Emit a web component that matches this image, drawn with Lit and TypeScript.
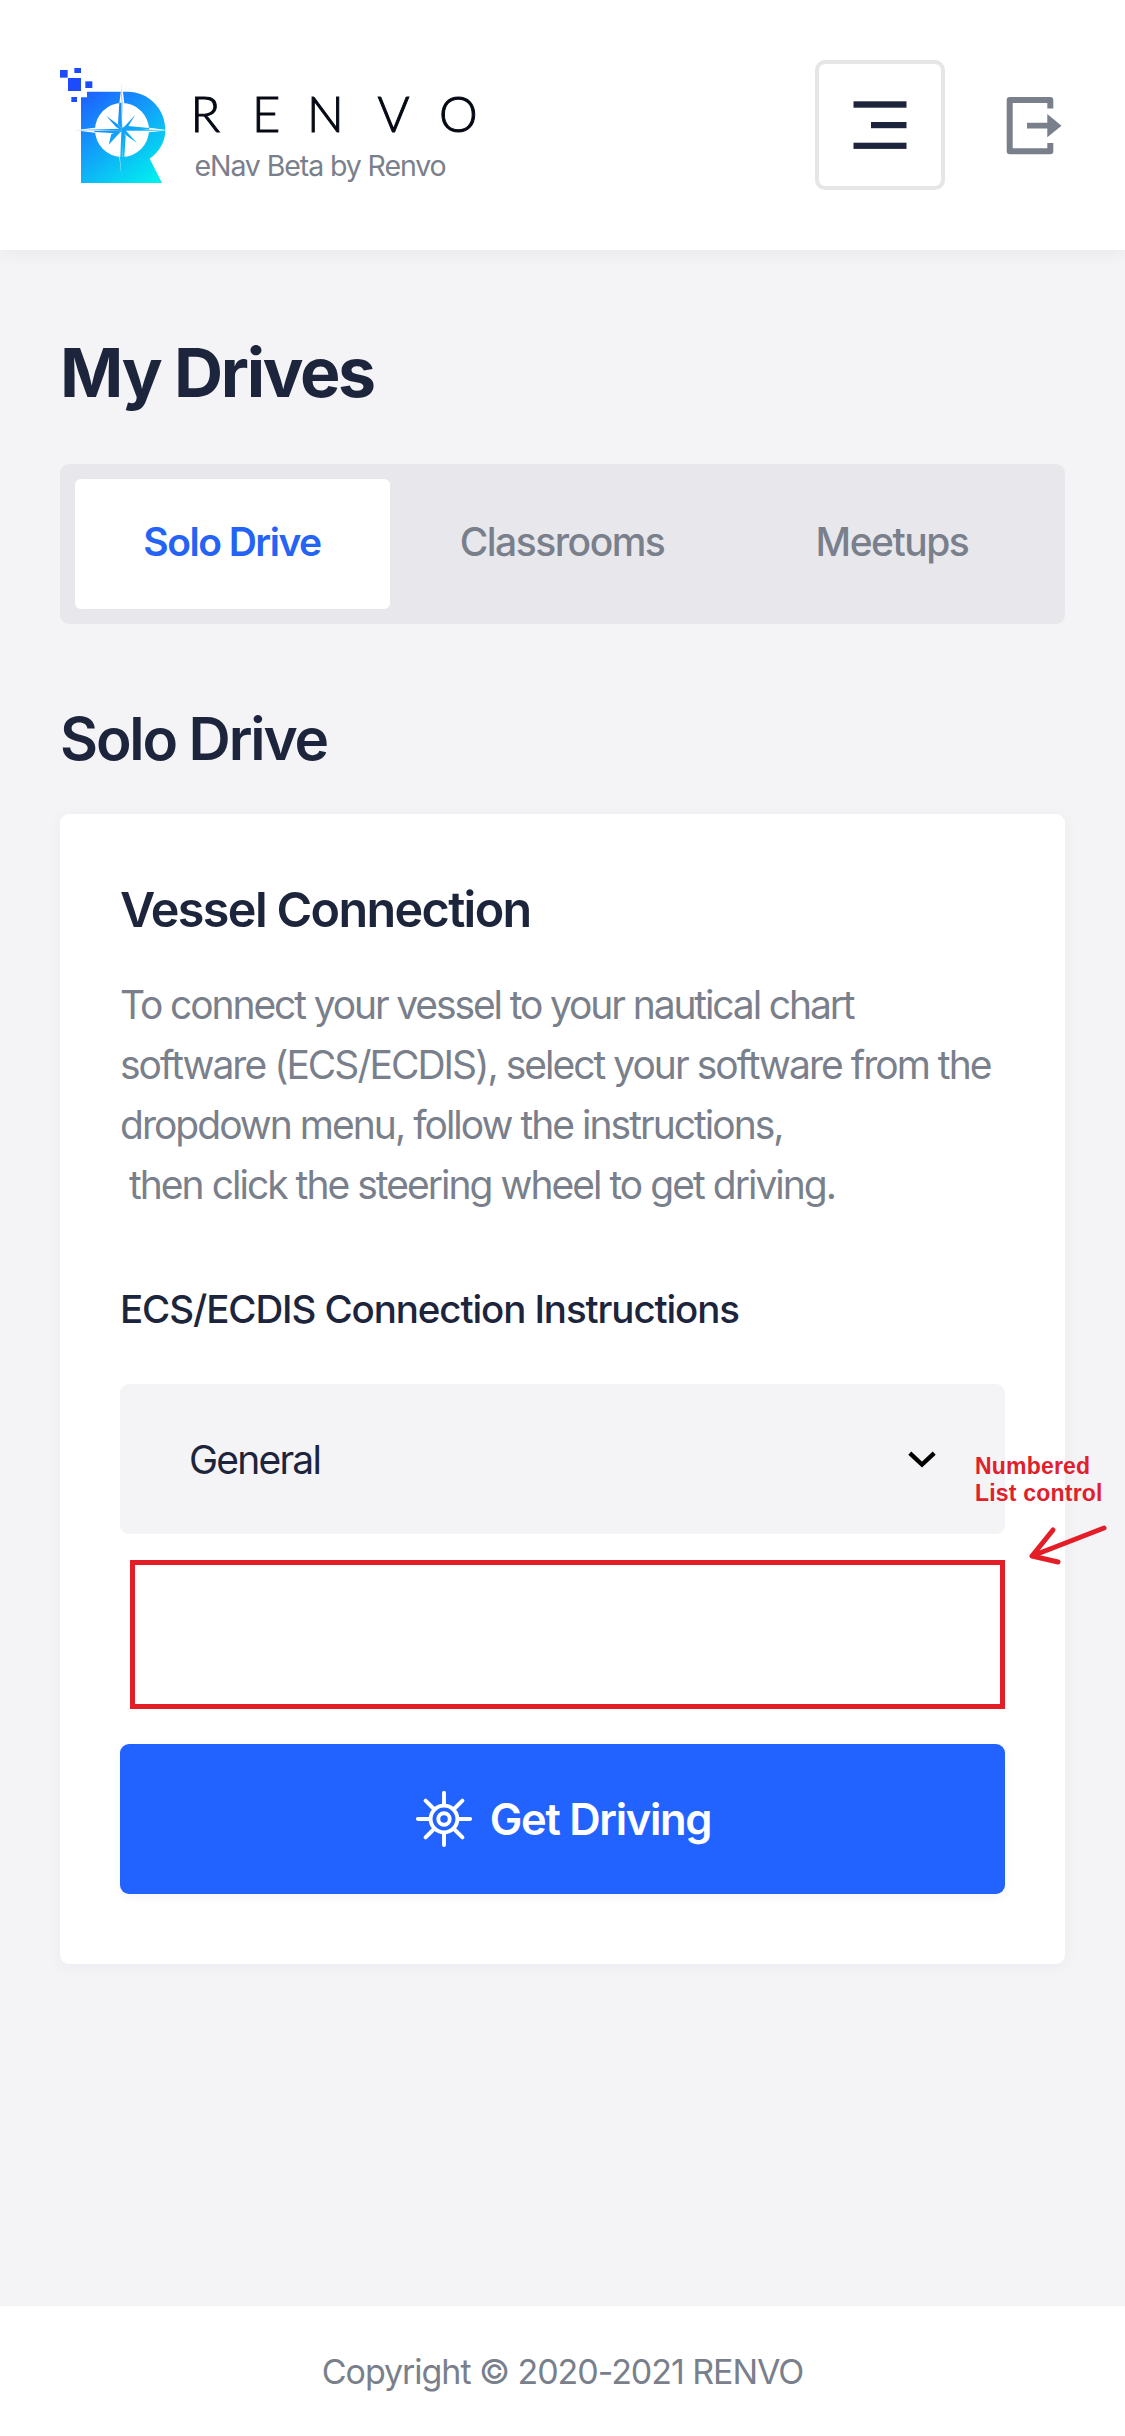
import { LitElement, html, css, svg } from "lit";
import { customElement, state } from "lit/decorators.js";
import { classMap } from "lit/directives/class-map.js";

const logoMark = svg`
  <defs>
    <linearGradient id="mark" gradientUnits="userSpaceOnUse" x1="110" y1="110" x2="330" y2="400">
      <stop offset="0" stop-color="#1f55ff"></stop>
      <stop offset="0.5" stop-color="#12a0fa"></stop>
      <stop offset="1" stop-color="#00eeee"></stop>
    </linearGradient>
  </defs>
  <g fill="#1d4bfb">
    <rect x="60" y="60" width="23" height="23"></rect>
    <rect x="84" y="84" width="39" height="39"></rect>
    <rect x="103" y="54" width="20" height="15"></rect>
    <rect x="136" y="94" width="21" height="20"></rect>
    <rect x="94" y="141" width="17" height="15"></rect>
  </g>
  <path fill="url(#mark)" d="M141 125H262C326 125 376 176 376 240C376 276 358 306 329 326L366 399H123V142H141Z"></path>
  <circle cx="246" cy="240" r="81" fill="#fff"></circle>
  <path fill="#fff" d="M246 98L253 162L246 240L240 322L245 385L238 320V160L243 120ZM104 241L164 233L246 240L328 233L384 241L328 247L246 240L164 248Z"></path>
  <path fill="url(#mark)" d="M244 98L247 160L246 240L236 225L199 198L228 231L238 236L104 241L246 241L214 252L206 284L236 252L244 244L241 320L245 385L246 320L250 250L291 279L262 247L258 242L328 242L384 241L328 239L262 233L286 194L255 228L247 234Z"></path>
  <path fill="url(#mark)" d="M238 158L234 221L246 240L244 158ZM163 246L226 250L246 240L163 243ZM253 322L257 258L246 240L247 322ZM328 234L264 228L246 240L328 238Z"></path>
`;

const wheelIcon = svg`
  <g fill="none" stroke="#fff" stroke-width="3.9" stroke-linecap="round">
    <circle cx="28" cy="28" r="13.4"></circle>
    <circle cx="28" cy="28" r="5.7"></circle>
    ${[0, 45, 90, 135, 180, 225, 270, 315].map(
      (a) => svg`<path d="M28 13.5V1.9" transform=${`rotate(${a} 28 28)`}></path>`
    )}
  </g>
`;

@customElement("app-root")
export class AppRoot extends LitElement {
  @state() private active = 0;

  private tabs = [
    { label: "Solo Drive", cls: "t-solo" },
    { label: "Classrooms", cls: "t-class" },
    { label: "Meetups", cls: "t-meet" },
  ];

  static styles = css`
    :host {
      display: block;
      font-family: Inter, "Liberation Sans", sans-serif;
      color: #1d253c;
      background: #f4f4f7;
    }
    * { box-sizing: border-box; }
    h1, h2, h3, h4, p { margin: 0; white-space: nowrap; }
    button { font: inherit; border: 0; padding: 0; color: inherit; background: none; }
    svg { display: block; flex: none; }
    .page { min-height: 2436px; display: flex; flex-direction: column; }
    .header {
      height: 250px;
      background: #fff;
      padding: 0 60px;
      display: flex;
      align-items: center;
      box-shadow: 0 3px 18px rgba(20, 20, 40, 0.05);
    }
    .brand { display: flex; align-items: flex-start; height: 118px; }
    .brand-text { margin-left: 20px; }
    .word {
      font-family: Lato, Inter, sans-serif;
      font-size: 48.8px;
      font-weight: 300;
      fill: #050914;
      stroke: #050914;
      stroke-width: 1px;
    }
    .tagline {
      margin: 4px 0 0 4.5px;
      font-size: 28.5px;
      line-height: 34px;
      letter-spacing: -1.1px;
      color: #7a7f8c;
    }
    .menu {
      margin-left: auto;
      width: 130px;
      height: 130px;
      border: 4px solid #e6e6e6;
      border-radius: 10px;
      display: grid;
      place-items: center;
    }
    .logout { margin: 1px 3px 0 61px; }
    .main { flex: 1; padding: 82px 60px 0; }
    h1 { font-size: 68px; line-height: 80px; font-weight: 700; letter-spacing: -2.35px; }
    .tabs {
      margin-top: 52px;
      height: 160px;
      padding: 15px;
      border-radius: 9px;
      background: #e8e8ec;
      display: grid;
      grid-template-columns: repeat(3, 1fr);
      gap: 15px;
    }
    .tab {
      border-radius: 6px;
      padding: 0 1px 5px 0;
      font-size: 39px;
      font-weight: 500;
      letter-spacing: -1.5px;
      color: #7a7f8c;
    }
    .tab.on { background: #fff; color: #2563f5; font-weight: 600; letter-spacing: -1.5px; }
    h2 { margin-top: 80px; font-size: 58.5px; line-height: 70px; font-weight: 600; letter-spacing: -2.15px; }
    .card {
      margin-top: 40px;
      height: 1150px;
      padding: 66px 60px 70px;
      border-radius: 9px;
      background: #fff;
      box-shadow: 0 3px 18px rgba(20, 20, 40, 0.04);
      position: relative;
    }
    h3 { font-size: 48.5px; line-height: 60px; font-weight: 600; letter-spacing: -1.65px; }
    .copy {
      margin-top: 35px;
      font-size: 39px;
      line-height: 60px;
      letter-spacing: -1.98px;
      color: #7a7f8c;
      white-space: pre;
    }
    .copy::first-line { letter-spacing: -2.12px; }
    h4 { margin-top: 69px; font-size: 38.5px; line-height: 50px; font-weight: 500; letter-spacing: -1.1px; }
    .select {
      margin-top: 50px;
      height: 150px;
      padding: 0 69px;
      border-radius: 9px;
      background: #f4f4f7;
      display: flex;
      align-items: center;
      justify-content: space-between;
      font-size: 39px;
      letter-spacing: -1.8px;
    }
    .select svg { margin-top: 2px; }
    .list { margin: 26px 0 0 10px; height: 149px; border: 5px solid #e41e26; }
    .go {
      margin-top: 35px;
      width: 100%;
      height: 150px;
      padding-left: 2px;
      border-radius: 9px;
      background: #2262ff;
      color: #fff;
      display: flex;
      align-items: center;
      justify-content: center;
      gap: 18px;
      font-size: 43.5px;
      font-weight: 600;
      letter-spacing: -1.3px;
      box-shadow: 0 3px 12px rgba(20, 20, 40, 0.04);
    }
    .note {
      position: absolute;
      left: 915px;
      top: 639px;
      color: #e0202b;
      font: 700 23px/27px "Liberation Sans", Arial, sans-serif;
      letter-spacing: 0.2px;
      white-space: nowrap;
    }
    .note svg { margin: 16px 0 0 52px; }
    .footer {
      height: 130px;
      background: #fff;
      display: grid;
      place-items: center;
      font-size: 34px;
      letter-spacing: -1.05px;
      color: #7a7f8c;
    }
  `;

  render() {
    return html`
      <div class="page">
        <header class="header">
          <div class="brand">
            <svg width="110" height="118" viewBox="60 48 330 354">${logoMark}</svg>
            <div class="brand-text">
              <svg width="300" height="79" viewBox="190 66 300 79">
                <text class="word" x="190.5 252 307 377.5 439" y="132">RENVO</text>
              </svg>
              <p class="tagline">eNav Beta by Renvo</p>
            </div>
          </div>
          <button class="menu" aria-label="Menu">
            <svg width="54" height="48" viewBox="0 0 54 48" fill="#1d253c">
              <rect x="0.5" y="0.3" width="53" height="6.4"></rect>
              <rect x="18" y="21" width="35.5" height="6.2"></rect>
              <rect x="0.5" y="41.7" width="53" height="6.2"></rect>
            </svg>
          </button>
          <button class="logout" aria-label="Log out">
            <svg width="56" height="60" viewBox="0 0 56 60">
              <path d="M44.3 12.5V4H3.7V55.3H44.3V47" fill="none" stroke="#7a7f8c" stroke-width="6" stroke-linejoin="round"></path>
              <path d="M21 26.8H41.3V18L55.5 29.7L41.3 41.2V32.6H21Z" fill="#7a7f8c"></path>
            </svg>
          </button>
        </header>
        <main class="main">
          <h1>My Drives</h1>
          <nav class="tabs">
            ${this.tabs.map(
              (t, i) => html`<button
                class=${classMap({ tab: true, [t.cls]: true, on: i === this.active })}
                @click=${() => (this.active = i)}
              >${t.label}</button>`
            )}
          </nav>
          <h2>Solo Drive</h2>
          <section class="card">
            <h3>Vessel Connection</h3>
            <p class="copy">${"To connect your vessel to your nautical chart\nsoftware (ECS/ECDIS), select your software from the\ndropdown menu, follow the instructions,\n then click the steering wheel to get driving."}</p>
            <h4>ECS/ECDIS Connection Instructions</h4>
            <div class="select">
              <span>General</span>
              <svg width="28" height="18" viewBox="0 0 28 18">
                <path d="M1.8 2.2L14 13.6L26.2 2.2" fill="none" stroke="#000" stroke-width="4.4"></path>
              </svg>
            </div>
            <div class="list"></div>
            <button class="go">
              <svg width="56" height="56" viewBox="0 0 56 56">${wheelIcon}</svg>
              <span>Get Driving</span>
            </button>
            <div class="note">
              Numbered<br />List control
              <svg width="82" height="44" viewBox="0 0 82 44">
                <path d="M77 5L5 33M26 7L5 33L31 39" fill="none" stroke="#e41e26" stroke-width="5" stroke-linecap="round" stroke-linejoin="round"></path>
              </svg>
            </div>
          </section>
        </main>
        <footer class="footer"><span>Copyright © 2020-2021 RENVO</span></footer>
      </div>
    `;
  }
}
